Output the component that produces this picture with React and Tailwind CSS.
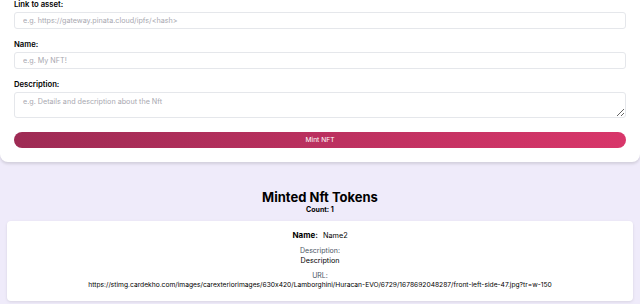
export default function App() {
  const url =
    "https://stimg.cardekho.com/images/carexteriorimages/630x420/Lamborghini/Huracan-EVO/6729/1678692048287/front-left-side-47.jpg?tr=w-150";
  return (
    <div className="w-[640px] h-[304px] overflow-hidden bg-[#efebfa] font-[Inter,sans-serif] [font-feature-settings:'calt'_0] text-black">
      <div className="bg-white rounded-b-[8px] shadow-[0_2px_3px_rgba(0,0,0,0.12)] px-[14px] pb-[14px] flex flex-col">
        <label className="block text-[7.7px] leading-[9px] font-semibold mb-[3px]">Link to asset:</label>
        <input
          className="h-[17px] w-full border border-[#e5e7eb] rounded-[3px] px-[8px] text-[7.2px] placeholder:text-[#a8a8b0] outline-none mb-[11px]"
          placeholder="e.g. https://gateway.pinata.cloud/ipfs/<hash>"
        />
        <label className="block text-[7.7px] leading-[9px] font-semibold mb-[3px]">Name:</label>
        <input
          className="h-[17px] w-full border border-[#e5e7eb] rounded-[3px] px-[8px] text-[7.2px] placeholder:text-[#a8a8b0] outline-none mb-[11px]"
          placeholder="e.g. My NFT!"
        />
        <label className="block text-[7.7px] leading-[9px] font-semibold mb-[3px]">Description:</label>
        <textarea
          className="block h-[26px] w-full border border-[#e5e7eb] rounded-[3px] px-[8px] py-[4px] text-[7.2px] leading-[9px] placeholder:text-[#a8a8b0] outline-none mb-[14px]"
          placeholder="e.g. Details and description about the Nft"
        />
        <button className="h-[16px] w-full rounded-full bg-linear-to-r from-[#9e2b54] to-[#d8366a] text-white text-[6.7px] font-normal flex items-center justify-center">
          Mint NFT
        </button>
      </div>

      <div className="flex flex-col items-center mt-[26.7px]">
        <h1 className="text-[13px] leading-[16px] font-bold">Minted Nft Tokens</h1>
        <p className="text-[7px] leading-[9px] font-bold">Count: 1</p>
      </div>

      <div className="mx-[7px] mt-[7px] bg-white rounded-[4px] shadow-[0_1px_3px_rgba(0,0,0,0.1)] pt-[9px] pb-[11px] flex flex-col items-center">
        <div className="flex items-baseline gap-[5px] leading-[10px]">
          <span className="text-[8px] font-bold">Name:</span>
          <span className="text-[7.3px]">Name2</span>
        </div>
        <p className="mt-[5px] text-[7px] leading-[9px] text-[#4b5563]">Description:</p>
        <p className="mt-[1px] text-[7.2px] leading-[9px]">Description</p>
        <p className="mt-[6px] text-[7px] leading-[9px] text-[#4b5563]">URL:</p>
        <p className="mt-[1px] text-[6.7px] leading-[9px] whitespace-nowrap">{url}</p>
      </div>
    </div>
  );
}
